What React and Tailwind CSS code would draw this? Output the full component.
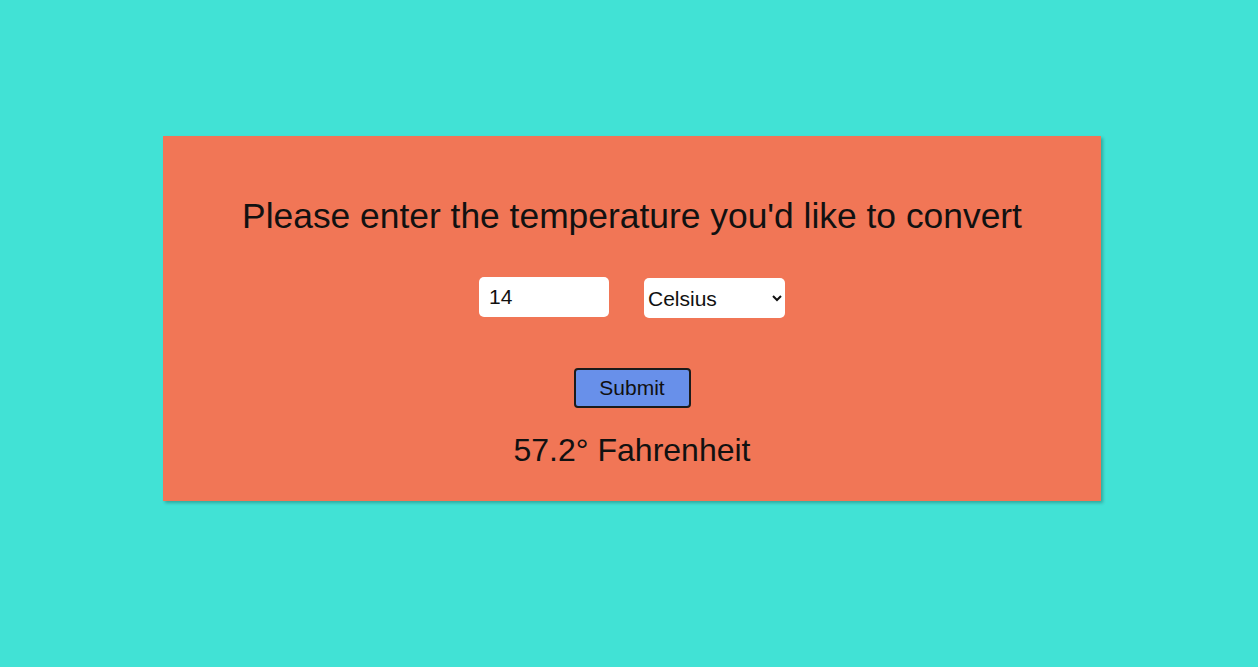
import { useState } from 'react';

const App = () => {
  const [temp, setTemp] = useState('14');
  const [unit, setUnit] = useState('celsius');

  return (
    <div className="min-h-screen w-full bg-[#41e2d5] pt-[136px] pl-[163px] font-['Liberation_Sans',Arial,sans-serif] text-[#111]">
      <div className="w-[938px] h-[365px] bg-[#f17656] shadow-[2px_2px_3px_rgba(0,0,0,0.25)] flex flex-col items-center pt-[60px]">
        <h1 className="text-[35.4px] leading-[40px] font-normal">
          Please enter the temperature you'd like to convert
        </h1>
        <form className="flex flex-col items-center" onSubmit={(e) => e.preventDefault()}>
          <div className="mt-[41px] flex items-start gap-[35px]">
            <input
              type="text"
              value={temp}
              onChange={(e) => setTemp(e.target.value)}
              className="w-[130px] h-[40px] rounded-[5px] bg-white pl-[10px] text-[21px] outline-none"
            />
            <select
              value={unit}
              onChange={(e) => setUnit(e.target.value)}
              className="mt-[1px] w-[141px] h-[40px] rounded-[5px] bg-white pl-0 text-[21px] outline-none"
            >
              <option value="celsius">Celsius</option>
              <option value="fahrenheit">Fahrenheit</option>
            </select>
          </div>
          <button
            type="submit"
            className="mt-[50px] w-[117px] h-[40px] rounded-[4px] border-2 border-[#1b1b1b] bg-[#6890ea] text-[21px] text-[#111]"
          >
            Submit
          </button>
        </form>
        <p className="mt-[24px] text-[32px] leading-[37px]">57.2° Fahrenheit</p>
      </div>
    </div>
  );
};

export default App;
